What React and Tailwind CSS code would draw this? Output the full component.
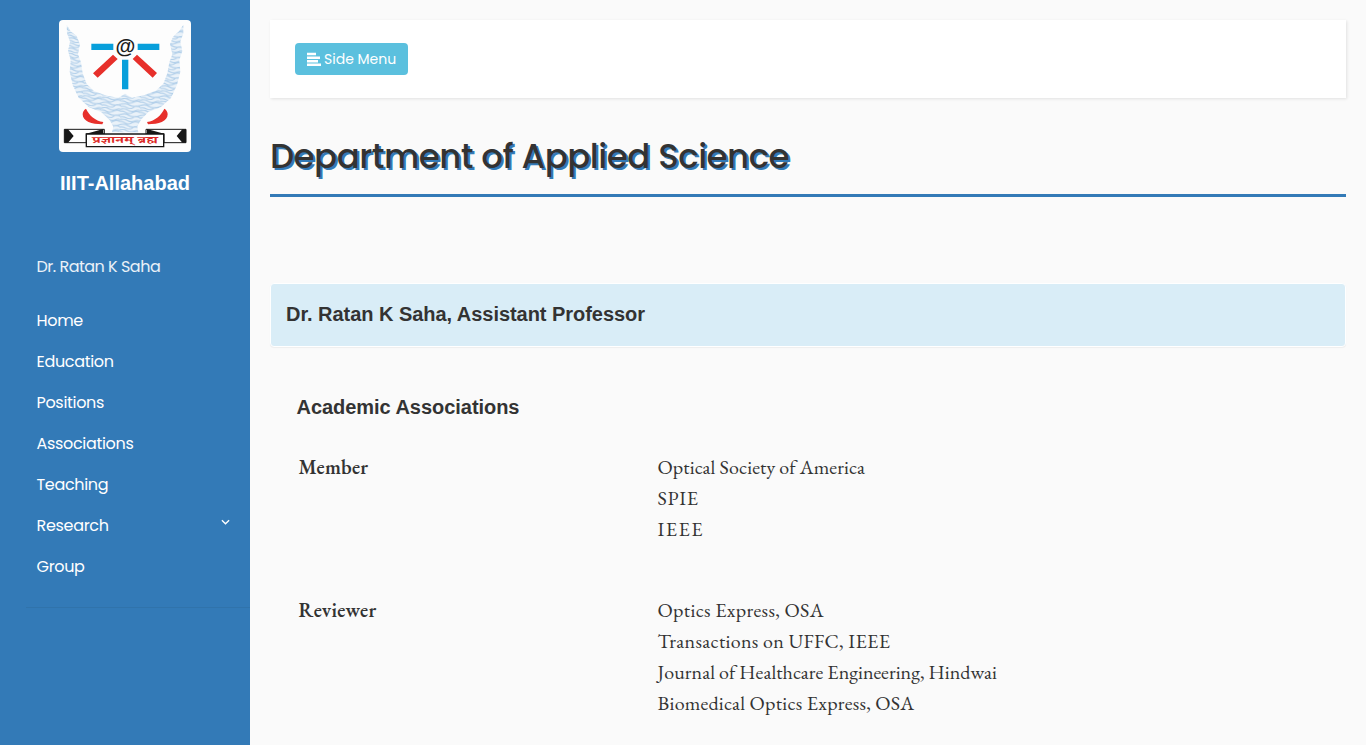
import React from "react";

const sans = "font-['Poppins','Inter',sans-serif]";
const arial = "font-['Liberation_Sans',Arial,sans-serif]";
const serif = "font-['EB_Garamond','Liberation_Serif',serif]";

const navItems = [
  { label: "Home" },
  { label: "Education" },
  { label: "Positions" },
  { label: "Associations" },
  { label: "Teaching" },
  { label: "Research", caret: true },
  { label: "Group" },
];

const members = [
  { text: "Optical Society of America", tracking: "tracking-[0.08px]" },
  { text: "SPIE", tracking: "tracking-[0.7px]" },
  { text: "IEEE", tracking: "tracking-[1.5px]" },
];

const reviews = [
  { text: "Optics Express, OSA", tracking: "tracking-[0.33px]" },
  { text: "Transactions on UFFC, IEEE", tracking: "tracking-[0.32px]" },
  { text: "Journal of Healthcare Engineering, Hindwai", tracking: "tracking-[0.03px]" },
  { text: "Biomedical Optics Express, OSA", tracking: "tracking-[0.25px]" },
];

function Logo() {
  return (
    <svg viewBox="27 30 396 396" className="h-[132px] w-[132px] rounded bg-[#fdfdfd]" role="img" aria-label="IIIT-Allahabad">
      <defs>
        <pattern id="waves" width="58" height="31" patternUnits="userSpaceOnUse" patternTransform="rotate(4)">
          <rect width="58" height="31" fill="#eaf2f9" />
          <path
            d="M0 4Q10 -2 22 4T44 5T58 4M-6 11Q6 6 16 12T38 10T64 12M0 19Q14 14 26 20T58 19M-4 27Q8 23 20 28T40 25T62 27"
            fill="none"
            stroke="#b3d0ea"
            strokeWidth="3.4"
          />
        </pattern>
      </defs>
      <path
        d="M50 44L62 64L80 78L90 103L84 133L93 157L98 190L110 222L132 243L170 257L205 263L225 251L246 263L282 256L317 242L340 221L352 190L358 157L367 133L360 103L369 80L387 64L400 44L400 70L391 95L397 123L388 150L391 185L381 225L363 264L332 292L295 306L273 329L262 350L265 367L186 367L190 350L178 329L154 307L116 291L86 263L68 225L59 185L62 151L54 122L60 95L51 70Z"
        fill="url(#waves)"
      />
      <path d="M124 101H190V120H124ZM263 101H328V120H263ZM216 149H235V238H216Z" fill="#079fdb" />
      <path d="M189 134L203 147L143 203L129 190ZM261 134L321 189L308 203L248 147Z" fill="#e7302b" />
      <text x="226" y="128" textAnchor="middle" fontSize="61" fontWeight="700" fill="#1b1b1b" className={arial}>@</text>
      <path d="M108 296C118 317 135 332 160 336L157 343C125 343 98 334 98 313Q98 302 108 296ZM343 296C333 317 316 332 291 336L294 343C326 343 353 334 353 313Q353 302 343 296Z" fill="#e7302b" />
      <g stroke="#171717" strokeWidth="3" fill="#fff">
        <path d="M43 358H163V372H109V398H43ZM408 358H288V372H342V398H408Z" />
      </g>
      <path d="M43 358H54L71 378L54 398H43ZM408 358H397L380 378L397 398H408ZM106 372L160 357V372ZM345 372L291 357V372Z" fill="#171717" />
      <path d="M109 372H341V410H109Z" fill="#fff" stroke="#171717" strokeWidth="4" />
      <text x="225" y="399" textAnchor="middle" fontSize="28" fontWeight="700" fill="#dc2824" textLength="196" lengthAdjust="spacingAndGlyphs" className="font-['Noto_Serif_Devanagari','Noto_Sans_Devanagari','Noto_Sans',serif]">प्रज्ञानम् ब्रह्म</text>
    </svg>
  );
}

function Entries({ title, items }) {
  return (
    <section className={`flex pl-[28.5px] text-[20px] leading-[31px] text-[#333] ${serif}`}>
      <h3 className="w-[359px] font-semibold tracking-[0.25px]">{title}</h3>
      <ul>
        {items.map((item) => (
          <li key={item.text} className={item.tracking}>{item.text}</li>
        ))}
      </ul>
    </section>
  );
}

export default function App() {
  return (
    <div className={`flex h-[745px] w-full overflow-hidden bg-[#fafafa] ${sans}`}>
      <aside className="flex w-[250px] shrink-0 flex-col bg-[#337ab7] text-white">
        <div className="flex flex-col items-center pt-5">
          <Logo />
          <h3 className={`mt-[19px] text-[20px] font-bold leading-6 ${arial}`}>IIIT-Allahabad</h3>
        </div>
        <p className="mt-[60px] pl-[36.5px] text-[16px] leading-6 tracking-[-0.5px] text-white/90">Dr. Ratan K Saha</p>
        <nav className="mt-[21px]">
          <ul>
            {navItems.map((item) => (
              <li key={item.label} className="flex h-[41px] items-center justify-between pl-[36.5px] pr-5 text-[16px] tracking-[-0.32px]">
                <a>{item.label}</a>
                {item.caret && (
                  <svg viewBox="0 0 10 6" className="mb-[8px] h-[6px] w-[9px]" fill="none" stroke="currentColor" strokeWidth="1.5">
                    <path d="M1 1L5 5L9 1" />
                  </svg>
                )}
              </li>
            ))}
          </ul>
        </nav>
        <hr className="ml-[26px] mt-5 border-[#3073ab]" />
      </aside>

      <main className="min-w-0 flex-1 p-5">
        <div className="flex h-[78px] items-center bg-white pl-[25px] shadow-[1px_1px_3px_rgba(0,0,0,0.1)]">
          <button className="flex h-8 w-[113px] items-center gap-[3px] rounded bg-[#5bc0de] pl-3 text-[14px] text-white">
            <svg viewBox="0 0 14 14" className="mb-px h-[14px] w-[14px] shrink-0" fill="currentColor">
              <path d="M0 .8H9V3.2H0ZM0 4.5H13V6.9H0ZM0 8H11V10.4H0ZM0 11.6H14V14H0Z" />
            </svg>
            <span className="whitespace-nowrap">Side Menu</span>
          </button>
        </div>

        <header className="mt-9 flex h-[63px] border-b-[3px] border-[#337ab7]">
          <h1 className="whitespace-nowrap text-[34px] font-medium leading-[44px] tracking-[-0.5px] text-[#333] [text-shadow:2px_2px_#337ab7]">
            Department of Applied Science
          </h1>
        </header>

        <div className="mt-[86px] h-[64px] rounded-[4px] border border-white bg-[#d9edf7] pl-[15px] pt-[18px] shadow-[0_1px_1px_rgba(0,0,0,0.05)]">
          <h2 className={`text-[20px] font-bold leading-6 tracking-[-0.04px] text-[#333] ${arial}`}>Dr. Ratan K Saha, Assistant Professor</h2>
        </div>

        <h2 className={`mt-[48px] pl-[26.5px] text-[20px] font-bold leading-6 tracking-[-0.04px] text-[#333] ${arial}`}>Academic Associations</h2>

        <div className="mt-[33px] flex flex-col gap-[50px]">
          <Entries title="Member" items={members} />
          <Entries title="Reviewer" items={reviews} />
        </div>
      </main>
    </div>
  );
}
